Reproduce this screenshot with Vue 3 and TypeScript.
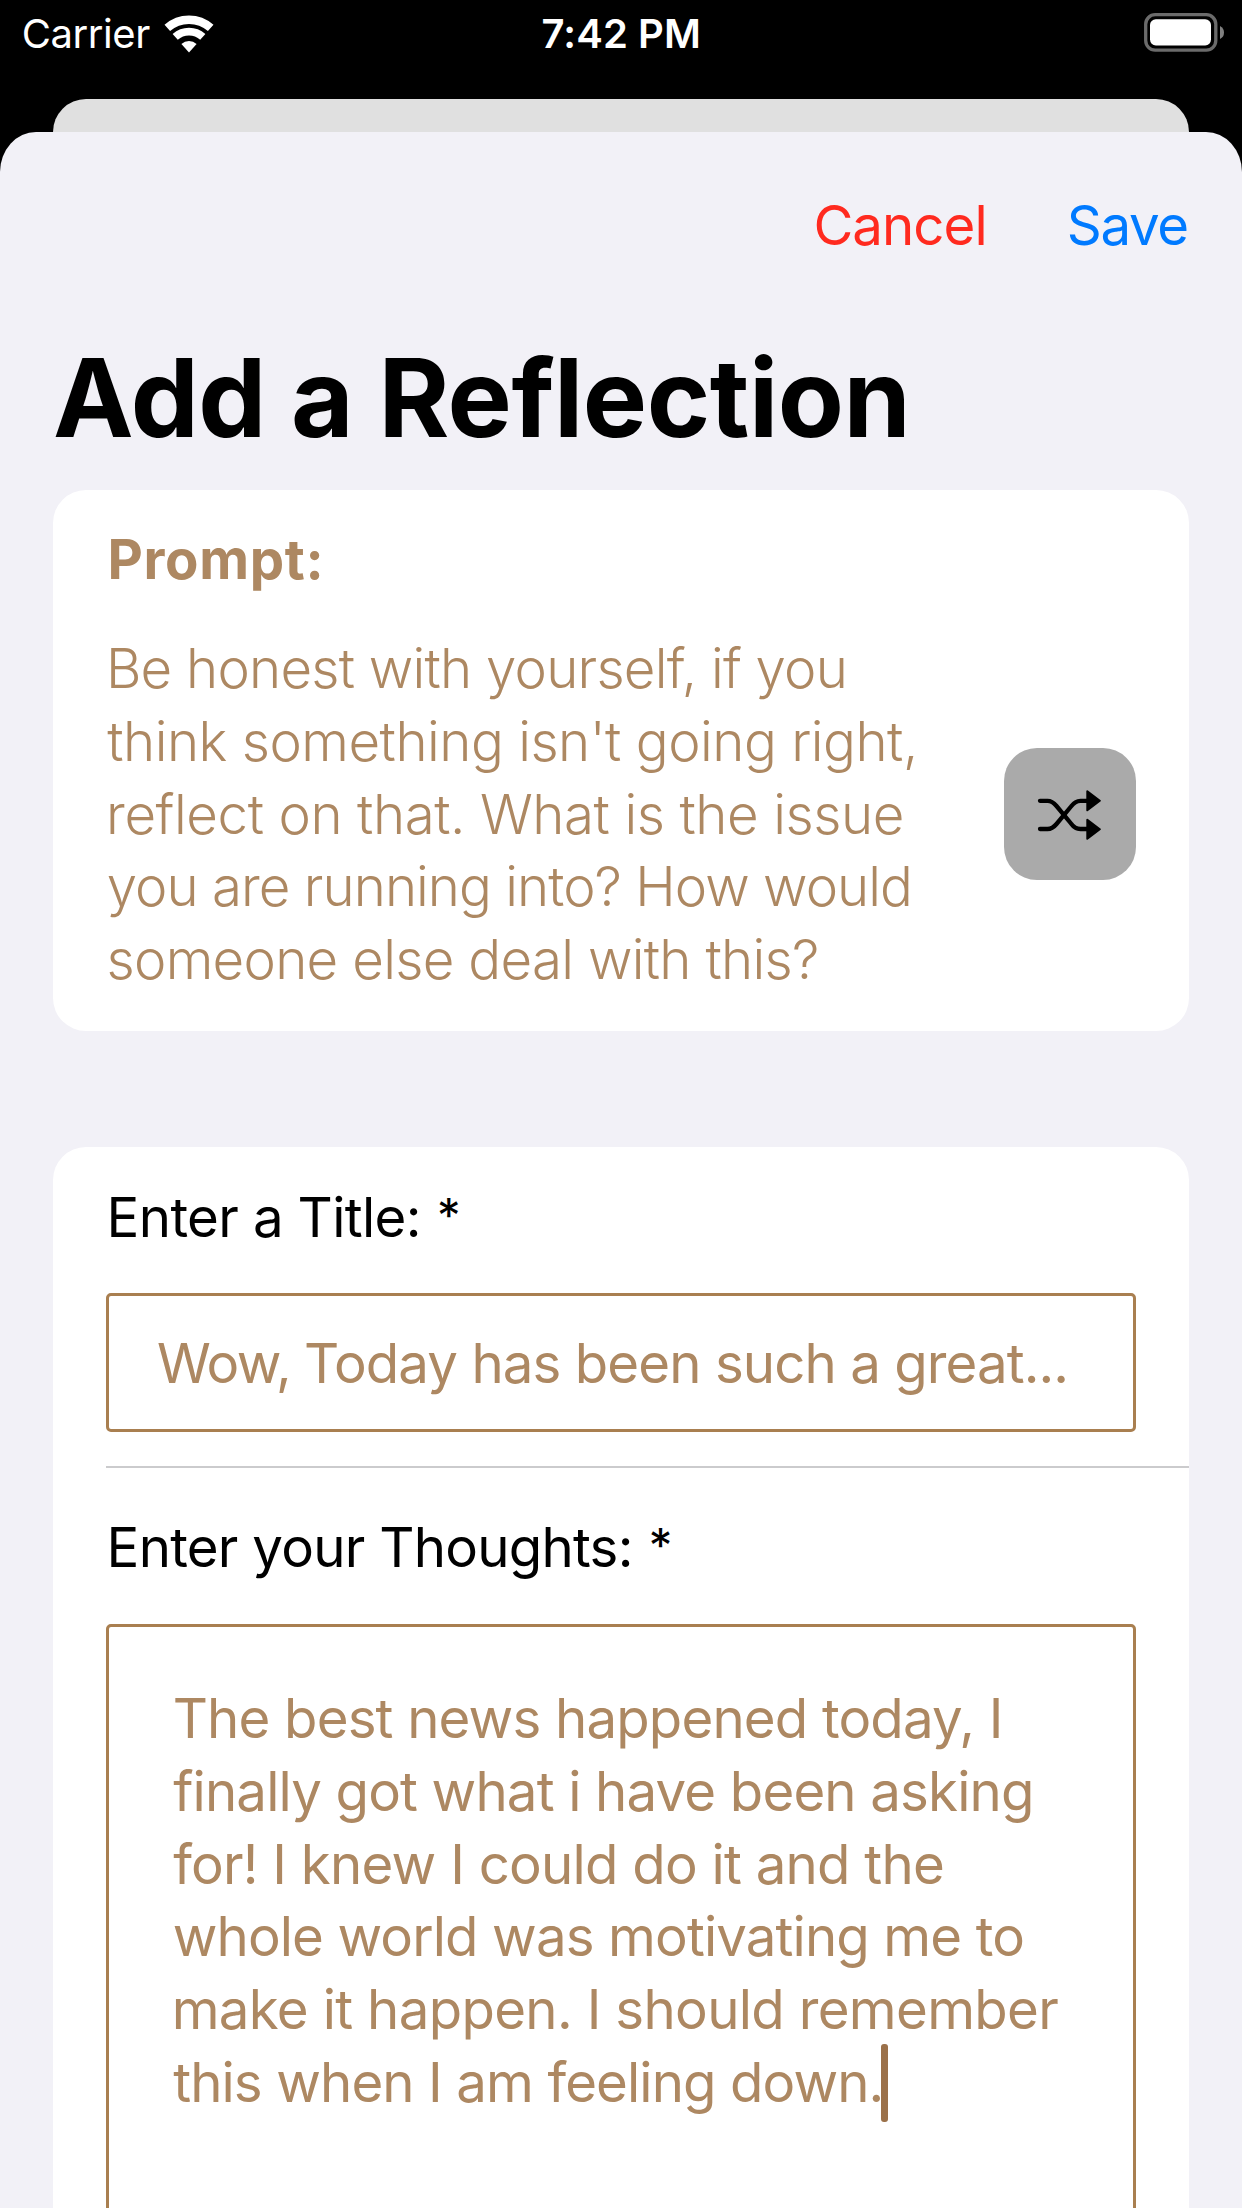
<script setup lang="ts">
interface TextLine {
  text: string
  tracking: number
  indent: number
}

const promptLines: TextLine[] = [
  { text: 'Be honest with yourself, if you', tracking: -0.76, indent: 0.4 },
  { text: "think something isn't going right,", tracking: -0.5, indent: 1.8 },
  { text: 'reflect on that. What is the issue', tracking: -0.42, indent: 0.6 },
  { text: 'you are running into? How would', tracking: -0.96, indent: 1.2 },
  { text: 'someone else deal with this?', tracking: -0.7, indent: 1 },
]

const thoughtLines: TextLine[] = [
  { text: 'The best news happened today, I', tracking: -0.835, indent: 1 },
  { text: 'finally got what i have been asking', tracking: -0.843, indent: 1.5 },
  { text: 'for! I knew I could do it and the', tracking: -0.759, indent: 1.5 },
  { text: 'whole world was motivating me to', tracking: -0.876, indent: 1 },
  { text: 'make it happen. I should remember', tracking: -0.676, indent: 0 },
  { text: 'this when I am feeling down.', tracking: -0.9, indent: 1.5 },
]

const lineStyle = (line: TextLine) => ({
  letterSpacing: `${line.tracking}px`,
  paddingLeft: `${line.indent}px`,
})
</script>

<template>
  <div class="screen">
    <header class="status">
      <div class="carrier">
        <span class="carrier-name">Carrier</span>
        <svg class="wifi" viewBox="0 0 50 38" width="50" height="38">
          <path d="M3.3 12.9A32.8 32.8 0 0 1 46.7 12.9" fill="none" stroke="#fff" stroke-width="8.4" />
          <path d="M11.2 21.9A20.8 20.8 0 0 1 38.8 21.9" fill="none" stroke="#fff" stroke-width="7.8" />
          <path d="M25 37.5L17.4 28.9A11.5 11.5 0 0 1 32.6 28.9Z" fill="#fff" />
        </svg>
      </div>
      <span class="time">7:42 PM</span>
      <svg class="battery" viewBox="0 0 80 39" width="80" height="39">
        <rect x="1.7" y="1.7" width="70.1" height="35.4" rx="9.5" fill="none" stroke="#6b6b6b" stroke-width="3.3" />
        <rect x="6" y="6.2" width="61" height="26.2" rx="5.8" fill="#fff" />
        <path d="M76 13q4 2 4 6.500t-4 6.500Z" fill="#808080" />
      </svg>
    </header>

    <div class="backdrop-card"></div>

    <main class="sheet">
      <nav class="toolbar">
        <span class="action cancel">Cancel</span>
        <span class="action save">Save</span>
      </nav>

      <h1 class="title">Add a Reflection</h1>

      <section class="card prompt-card">
        <h2 class="prompt-heading">Prompt:</h2>
        <div class="prompt-row">
          <div class="prompt-text">
            <div v-for="line in promptLines" :key="line.text" class="line" :style="lineStyle(line)">{{ line.text }}</div>
          </div>
          <div class="shuffle">
            <svg viewBox="0 0 64 52" width="64" height="52">
              <g fill="none" stroke="#000" stroke-width="4.3" stroke-linecap="round">
                <path d="M3 11.800H10.500C15 11.800 17 14 19.500 17L34 34.500C36.500 38 39 40 43.500 40H51" />
                <path d="M3 40H10.500C15 40 17 38 19.500 35L34 17.500C36.500 14 39 11.800 43.500 11.800H51" />
              </g>
              <g fill="#000" stroke="#000" stroke-width="2" stroke-linejoin="round">
                <path d="M50.300 2.200L62.800 11.800L50.300 21.300Z" />
                <path d="M50.300 30.700L62.800 40.300L50.300 49.800Z" />
              </g>
            </svg>
          </div>
        </div>
      </section>

      <section class="card form-card">
        <div class="label">Enter a Title: <span class="required">*</span></div>
        <div class="field title-field"><span class="tight">Wow, </span>Today has been such a great...</div>
        <div class="divider"></div>
        <div class="label thoughts-label">Enter your Thoughts: <span class="required">*</span></div>
        <div class="field thoughts-field">
          <div v-for="(line, i) in thoughtLines" :key="line.text" class="line" :style="lineStyle(line)">{{ line.text }}<i v-if="i === thoughtLines.length - 1" class="caret"></i></div>
        </div>
      </section>
    </main>
  </div>
</template>

<style>
body {
  margin: 0;
  background: #000;
}
</style>

<style scoped>
.screen {
  box-sizing: border-box;
  width: 1242px;
  height: 2208px;
  overflow: hidden;
  display: flex;
  flex-direction: column;
  background: #000;
  color: #000;
  font-family: Inter, "Liberation Sans", sans-serif;
  font-size: 54.6px;
  line-height: 72px;
}

.status {
  flex: none;
  display: grid;
  grid-template-columns: 1fr auto 1fr;
  align-items: center;
  height: 67px;
  margin-bottom: 32px;
  padding: 0 18.5px 0 21.8px;
  color: #fff;
  font-size: 40px;
  line-height: 51px;
}

.carrier {
  display: flex;
  align-items: center;
}

.carrier-name {
  width: 142.6px;
  letter-spacing: -0.45px;
}

.time {
  font-weight: 600;
  letter-spacing: 0.1px;
  margin-right: 2.8px;
}

.battery {
  justify-self: end;
  margin-bottom: 2px;
}

.backdrop-card {
  flex: none;
  height: 33px;
  margin: 0 53px;
  border-radius: 33px 33px 0 0;
  background: #e0e0e0;
}

.sheet {
  flex: none;
  height: 2076px;
  box-sizing: border-box;
  padding: 57px 53px 0;
  border-radius: 36px 36px 0 0 / 40px 40px 0 0;
  background: #f2f1f7;
}

.toolbar {
  display: flex;
  justify-content: flex-end;
  gap: 80px;
  height: 72px;
  padding-right: 1.2px;
}

.cancel {
  color: #ff2a1f;
  letter-spacing: -0.961px;
}

.save {
  color: #007aff;
  letter-spacing: -1.3px;
}

.title {
  margin: 72px 0 27px;
  font-size: 108px;
  font-weight: 700;
  line-height: 130px;
  letter-spacing: -0.453px;
  white-space: nowrap;
}

.card {
  box-sizing: border-box;
  border-radius: 33px;
  background: #fff;
}

.prompt-card {
  height: 541px;
  padding: 33px 53px 0 52.5px;
  color: #ad8862;
}

.prompt-heading {
  margin: 0 0 37px;
  padding-left: 2px;
  font-size: inherit;
  font-weight: 700;
  letter-spacing: 0.67px;
}

.prompt-row {
  display: flex;
  align-items: center;
  justify-content: space-between;
}

.prompt-text {
  font-weight: 300;
}

.line {
  position: relative;
  width: max-content;
  height: 72.8px;
  line-height: 72.8px;
  white-space: nowrap;
}

.shuffle {
  display: flex;
  align-items: center;
  justify-content: center;
  box-sizing: border-box;
  width: 132.5px;
  height: 132.5px;
  padding: 3px 1px 0 0;
  border-radius: 33px;
  background: #aaa;
}

.form-card {
  height: 1200px;
  margin-top: 116px;
  padding: 34px 53px 0;
}

.label {
  height: 72px;
  padding-left: 0.6px;
  letter-spacing: -0.64px;
}

.thoughts-label {
  letter-spacing: -0.74px;
}

.required {
  margin-left: 1.5px;
  font-size: 47px;
  line-height: 0;
  vertical-align: 5px;
}

.field {
  box-sizing: border-box;
  border: 3px solid #a97f50;
  border-radius: 5px;
  color: #ad8862;
}

.title-field {
  height: 139px;
  margin-top: 40px;
  padding-left: 48px;
  line-height: 134px;
  letter-spacing: -0.93px;
  white-space: nowrap;
}

.tight {
  letter-spacing: -1.5px;
}

.divider {
  height: 2px;
  margin: 34px -53px 43px 0;
  background: #cbcbcd;
}

.thoughts-field {
  height: 800px;
  margin-top: 41px;
  padding: 55px 0 0 62.700px;
}

.caret {
  position: absolute;
  left: calc(100% - 2px);
  top: -1.7px;
  width: 6.4px;
  height: 78px;
  border-radius: 3px;
  background: #9b714a;
}
</style>
